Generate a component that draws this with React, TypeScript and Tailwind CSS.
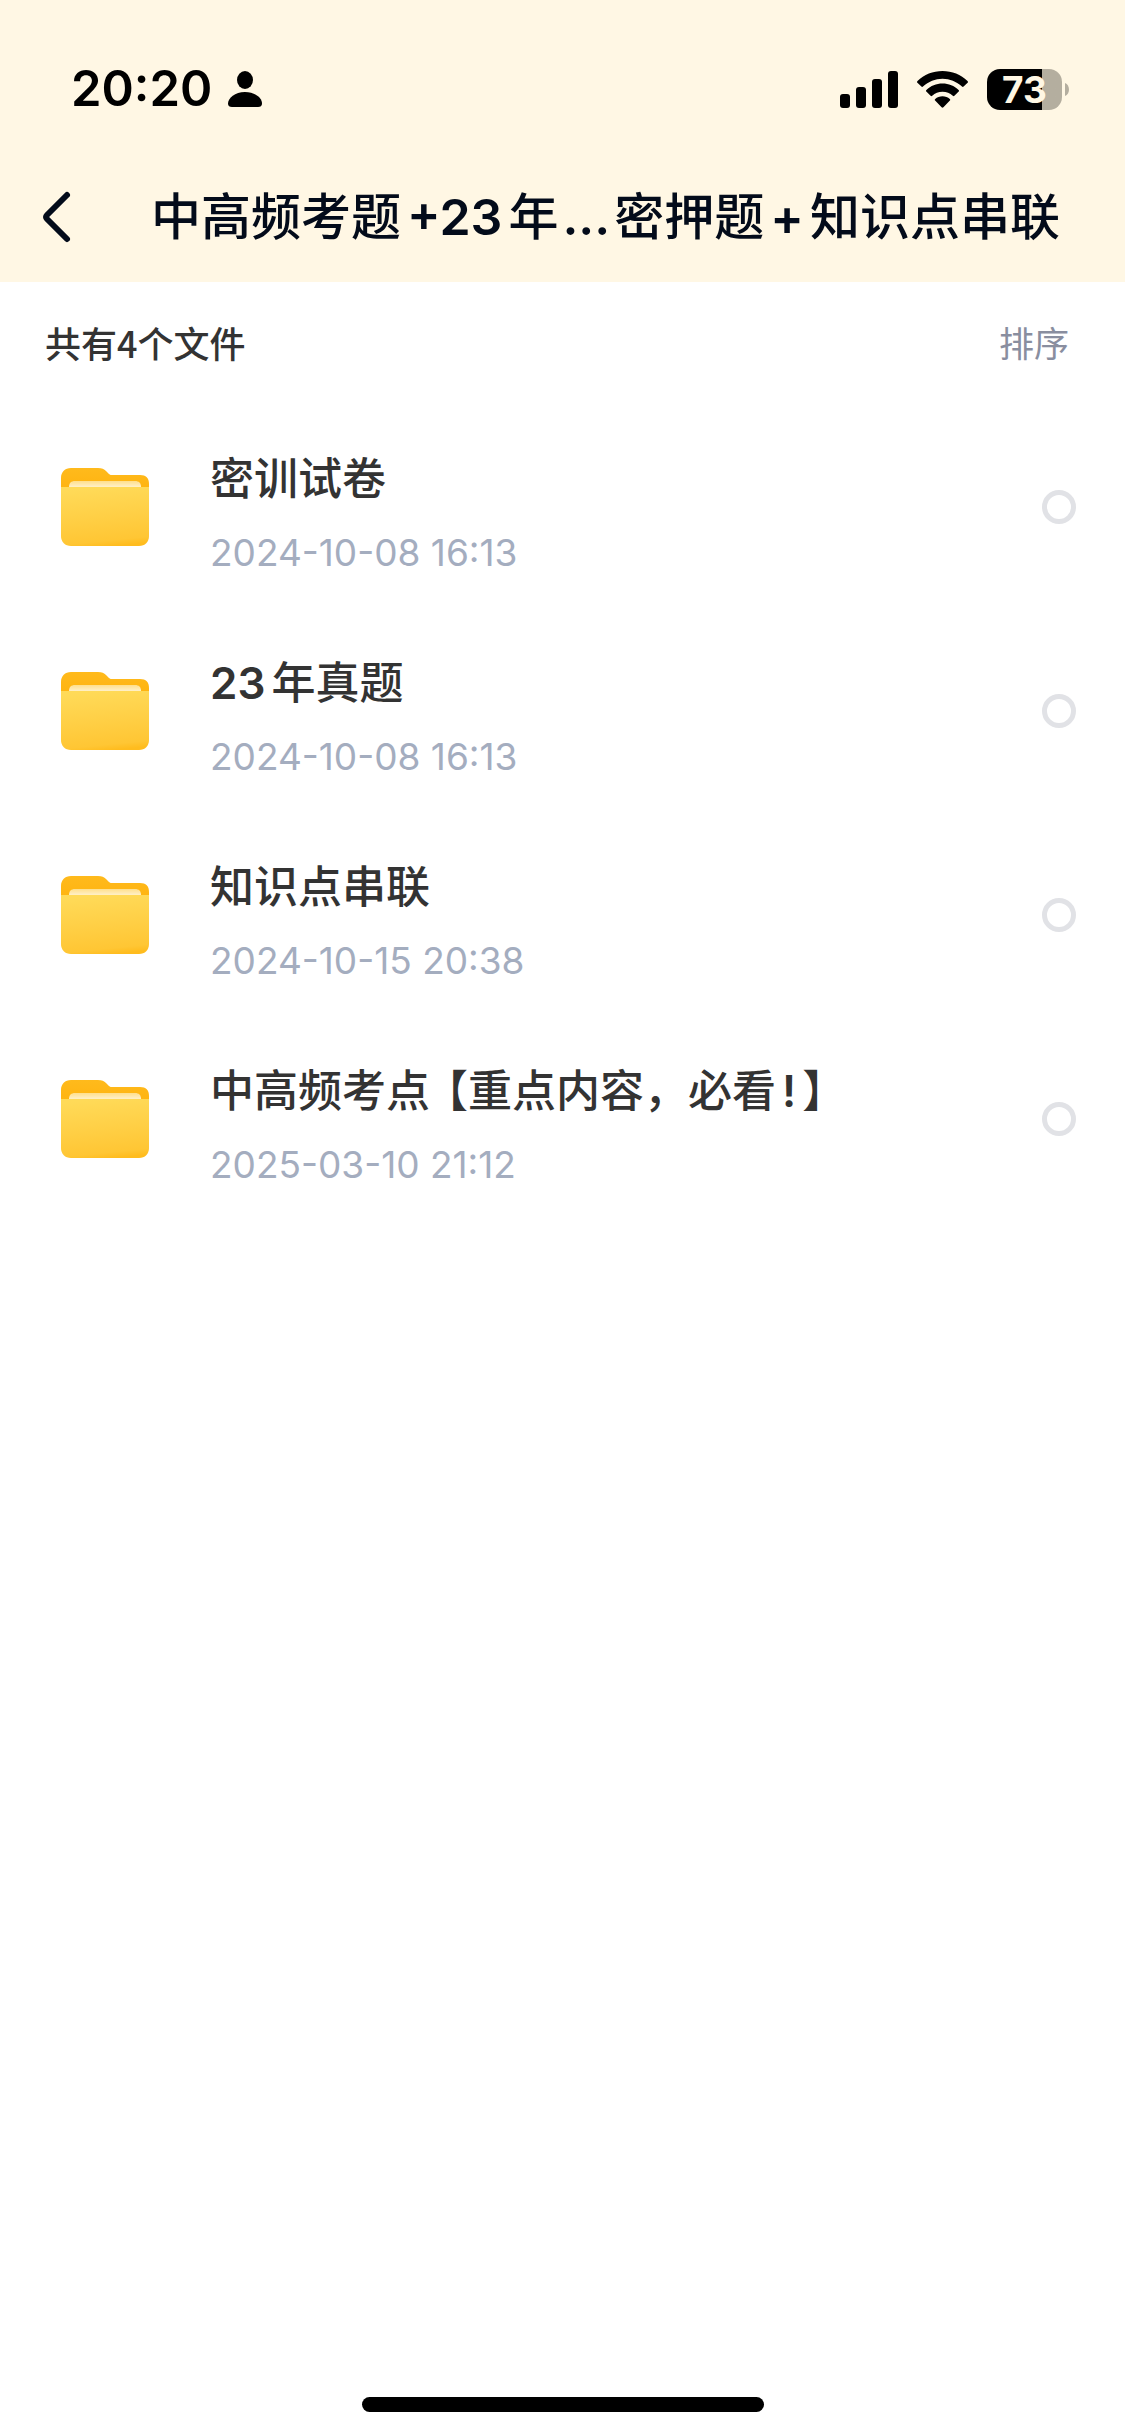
import React, { useState } from "react";
import clsx from "clsx";

type FileItem = {
  id: number;
  name: string;
  date: string;
};

const files: FileItem[] = [
  { id: 1, name: "密训试卷", date: "2024-10-08 16:13" },
  { id: 2, name: "23年真题", date: "2024-10-08 16:13" },
  { id: 3, name: "知识点串联", date: "2024-10-15 20:38" },
  { id: 4, name: "中高频考点【重点内容，必看!】", date: "2025-03-10 21:12" },
];

// Adds some air and weight to latin characters inside Chinese text
function MixedText({ text }: { text: string }) {
  const parts = text.split(/([\x21-\x7e]+|【)/).filter(Boolean);

  return (
    <>
      {parts.map((part, index) => {
        if (part === "【") {
          return (
            <span key={index} className="ml-4 [font-feature-settings:'halt']">
              {part}
            </span>
          );
        }
        if (part === "...") {
          return (
            <span key={index} className="mx-1 font-semibold">
              {part}
            </span>
          );
        }
        if (/^[\x21-\x7e]/.test(part)) {
          return (
            <span
              key={index}
              className={clsx("mr-1.5 font-semibold", index > 0 && "ml-1.5")}
            >
              {part}
            </span>
          );
        }
        return part;
      })}
    </>
  );
}

function StatusBar() {
  return (
    <div className="flex items-center justify-between h-[178px] pl-[71px] pr-14 text-black">
      <div className="flex items-center gap-4">
        <span className="text-[49px] leading-[60px] font-semibold">20:20</span>
        <svg width="34" height="36" viewBox="0 0 34 36" fill="currentColor">
          <ellipse cx="17" cy="9" rx="8" ry="9" />
          <path d="M4 36C1.500 36 0 35 0 32.500C0 27 7 21 17 21S34 27 34 32.500C34 35 32.500 36 30 36Z" />
        </svg>
      </div>

      <div className="flex items-center">
        {/* Signal */}
        <svg width="58" height="37" viewBox="0 0 58 37" fill="currentColor">
          <rect x="0" y="23" width="10" height="14" rx="3" />
          <rect x="16" y="16" width="10" height="21" rx="3" />
          <rect x="32" y="8" width="10" height="29" rx="3" />
          <rect x="48" y="0" width="10" height="37" rx="3" />
        </svg>
        {/* Wifi */}
        <svg
          className="ml-[19px]"
          width="51"
          height="37"
          viewBox="0 0 51 37"
          fill="currentColor"
        >
          <path d="M25.500 0C35 0 44 3.500 50.500 10C51.100 10.600 51.100 11.200 50.600 11.700L46.600 15.600C46.100 16.100 45.500 16.100 45 15.600C39.500 10.600 32.800 7.800 25.500 7.800S11.500 10.600 6 15.600C5.500 16.100 4.900 16.100 4.400 15.600L.4 11.700C-.1 11.200-.1 10.600.5 10C7 3.500 16 0 25.500 0Z" />
          <path d="M25.500 12.600C31.700 12.600 37.300 15 41.600 18.900C42.200 19.500 42.200 20.100 41.700 20.600L37.400 24.800C36.900 25.300 36.400 25.300 35.800 24.800C33 22.200 29.500 20.700 25.500 20.700S18 22.200 15.200 24.800C14.600 25.300 14.100 25.300 13.600 24.800L9.300 20.600C8.800 20.100 8.800 19.500 9.400 18.900C13.700 15 19.300 12.600 25.500 12.600Z" />
          <path d="M25.500 25.200C28.300 25.200 30.900 26.200 32.800 27.900C33.400 28.400 33.400 29 32.900 29.500L26.400 36.300C25.900 36.900 25.100 36.900 24.600 36.300L18.100 29.500C17.600 29 17.600 28.400 18.200 27.900C20.100 26.200 22.700 25.200 25.500 25.200Z" />
        </svg>
        {/* Battery */}
        <div className="ml-[19px] flex w-[75px] h-[41px] items-center justify-center rounded-[13px] bg-linear-to-r from-black from-73% to-[#b4ae9f] to-73% text-[37px] leading-[41px] font-bold text-[#fff7e4]">
          73
        </div>
        <svg
          className="ml-[3px]"
          width="4"
          height="13"
          viewBox="0 0 4 13"
          fill="#b4ae9f"
        >
          <path d="M0 0C5.300 2 5.300 11 0 13Z" />
        </svg>
      </div>
    </div>
  );
}

function FolderIcon() {
  return (
    <svg width="90" height="80" viewBox="0 0 90 80" className="shrink-0">
      <defs>
        <linearGradient id="folder-back" x1="0" y1="0" x2="0" y2="1">
          <stop offset="0" stopColor="#ffba1c" />
          <stop offset="1" stopColor="#ffb30f" />
        </linearGradient>
        <linearGradient id="folder-paper" x1="0" y1="0" x2="0" y2="1">
          <stop offset="0" stopColor="#ffdf8c" />
          <stop offset="0.5" stopColor="#fff0c8" />
        </linearGradient>
        <linearGradient id="folder-front" x1="0.45" y1="0" x2="0.6" y2="1">
          <stop offset="0" stopColor="#ffda58" />
          <stop offset="0.5" stopColor="#ffcf45" />
          <stop offset="0.9" stopColor="#ffc634" />
          <stop offset="1" stopColor="#ffbc1e" />
        </linearGradient>
      </defs>
      <path
        d="M1 24V11C1 5 5 1 11 1H38C42 1 44 2 46 4L49 7C50 8 51 8 53 8H80C86 8 89 11 89 17V24Z"
        fill="url(#folder-back)"
      />
      <path
        d="M9 20C9 16 11 14 15 14H75C79 14 81 16 81 20V26H9Z"
        fill="url(#folder-paper)"
      />
      <path
        d="M1 20H89V69C89 75 85 79 79 79H11C5 79 1 75 1 69Z"
        fill="url(#folder-front)"
      />
    </svg>
  );
}

export default function App() {
  const [selected, setSelected] = useState<number[]>([]);

  const toggle = (id: number) => {
    setSelected((prev) =>
      prev.includes(id) ? prev.filter((item) => item !== id) : [...prev, id]
    );
  };

  return (
    <div
      lang="zh-CN"
      className="flex flex-col min-h-screen bg-white font-['Inter','Noto_Sans_CJK_SC',sans-serif]"
    >
      {/* Header */}
      <header className="bg-[#fff7e4]">
        <StatusBar />
        <div className="flex items-center h-[104px] pl-10 pr-16 pb-[26px] text-[#030b1a]">
          <button type="button" aria-label="返回" className="shrink-0">
            <svg
              width="34"
              height="54"
              viewBox="0 0 34 54"
              fill="none"
              stroke="currentColor"
              strokeWidth="6"
              strokeLinecap="round"
              strokeLinejoin="round"
            >
              <path d="M27 5L7 25Q5 27 7 29L27 49" />
            </svg>
          </button>
          <h1 className="flex-1 text-center pl-[76px] text-[50px] leading-[60px] font-medium whitespace-nowrap">
            <MixedText text="中高频考题+23年...密押题+知识点串联" />
          </h1>
        </div>
      </header>

      {/* File count and sort */}
      <div className="flex items-center justify-between h-[123px] pl-[45px] pr-14 pb-1 font-['Noto_Sans_CJK_SC',sans-serif] text-[36px] leading-[48px]">
        <p className="font-medium text-[#333333]">共有4个文件</p>
        <button type="button" className="text-[35px] text-[#898e9f]">
          排序
        </button>
      </div>

      {/* File list */}
      <ul className="flex-1">
        {files.map((file) => (
          <li key={file.id}>
            <label className="flex items-center h-[204px] pl-[60px] pr-[49px]">
              <FolderIcon />
              <span className="flex flex-1 flex-col gap-3.5 ml-[60px] pt-4.5">
                <span className="text-[44px] leading-[60px] font-medium text-[#333333]">
                  <MixedText text={file.name} />
                </span>
                <span className="text-[37px] leading-[60px] text-[#a4adbf]">
                  {file.date}
                </span>
              </span>
              <input
                type="checkbox"
                checked={selected.includes(file.id)}
                onChange={() => toggle(file.id)}
                className="appearance-none size-[34px] rounded-full border-5 border-[#e1e2e6] checked:bg-[#ffc533]"
              />
            </label>
          </li>
        ))}
      </ul>

      {/* Home indicator */}
      <div className="flex justify-center pb-6">
        <div className="w-[402px] h-[15px] rounded-full bg-black" />
      </div>
    </div>
  );
}
